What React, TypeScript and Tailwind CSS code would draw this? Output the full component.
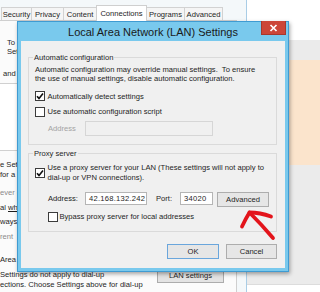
import React from "react";

const Cb = ({ checked }: { checked?: boolean }) => (
  <div className="w-[10px] h-[10px] border border-[#3c3c3c] bg-white flex items-center justify-center shrink-0">
    {checked && (
      <svg width="8" height="8" viewBox="0 0 8 8">
        <path d="M1 4.2 L3 6.4 L7 1.4" stroke="#111" strokeWidth="1.6" fill="none" />
      </svg>
    )}
  </div>
);

const Tab = ({ label, w, selected }: { label: string; w: string; selected?: boolean }) => (
  <div
    className={
      selected
        ? `${w} h-[16px] -mb-px -ml-px relative z-10 border border-b-0 border-[#cfcfcf] bg-white flex items-center justify-center`
        : `${w} h-[13px] -ml-px border border-b-0 border-[#d2d2d2] bg-[#f5f5f5] flex items-center justify-center`
    }
  >
    {label}
  </div>
);

const Frag = ({ children, cls }: { children: React.ReactNode; cls: string }) => (
  <div className={`${cls} h-[9px] whitespace-nowrap`}>{children}</div>
);

export default function App() {
  return (
    <div className="relative w-[320px] h-[292px] overflow-hidden flex bg-white font-['Liberation_Sans',Arial,sans-serif] text-[7.6px] text-[#1e1e1e] leading-[9px]">
      {/* Background Internet Options window */}
      <div className="w-[247px] h-full shrink-0 bg-[#f4f8fa] border-r border-[#a9cde6] flex flex-col">
        <div className="h-[20px] flex items-end pl-[2px] shrink-0">
          <Tab label="Security" w="w-[31px]" />
          <Tab label="Privacy" w="w-[33px]" />
          <Tab label="Content" w="w-[34px]" />
          <Tab label="Connections" w="w-[51px]" selected />
          <Tab label="Programs" w="w-[39px]" />
          <Tab label="Advanced" w="w-[39px]" />
        </div>
        <div className="w-[237px] flex-1 bg-[#fbfbfb] border-t border-r border-[#cfcfcf] flex flex-col whitespace-nowrap">
          <Frag cls="mt-[17px] pl-[7px]">To</Frag>
          <Frag cls="pl-[7px]">Set</Frag>
          <Frag cls="mt-[12.6px] pl-[3px]">and</Frag>
          <div className="mt-[5.2px] h-[68px] bg-white border-y border-[#d0d0d0]" />
          <Frag cls="mt-[9px]">e Set</Frag>
          <Frag cls="mt-[0.8px]">for a</Frag>
          <Frag cls="mt-[9.7px] text-[#8a8a8a]">ever c</Frag>
          <Frag cls="mt-[5.5px]">
            al <span className="underline">wh</span>
          </Frag>
          <Frag cls="mt-[5px]">ways</Frag>
          <Frag cls="mt-[6.5px] text-[#8a8a8a]">rent</Frag>
          <Frag cls="mt-[14px]">Area N</Frag>
          <div className="mt-[4.5px] flex items-start">
            <div className="w-[157px] pt-[1.5px] leading-[9.3px]">
              <div>Settings do not apply to dial-up</div>
              <div>ections. Choose Settings above for dial-up</div>
            </div>
            <div className="w-[67px] h-[14px] bg-[#e3e3e3] border border-[#acacac] flex items-center justify-center">
              LAN settings
            </div>
          </div>
        </div>
      </div>

      {/* Right desktop area */}
      <div className="flex-1 flex flex-col">
        <div className="h-[40px] bg-white shrink-0" />
        <div className="flex-1 bg-[#ebebeb] flex flex-col">
          <div className="mt-[20px] h-[105px] bg-[#fbe4cc]" />
          <div className="flex-1" />
          <div className="h-[8px] bg-white border-t border-[#dcdcdc]" />
        </div>
      </div>

      {/* LAN Settings dialog */}
      <div className="absolute left-[17px] top-[21px] w-[272px] h-[251px] border border-[#3f9bd2] bg-[#79c9ed] flex flex-col px-[3px] pb-[3px] shadow-[1px_2px_4px_rgba(0,0,0,0.35)]">
        <div className="relative h-[19px] shrink-0 flex items-center justify-center text-[11px] leading-[12px] text-[#1a1a1a]">
          Local Area Network (LAN) Settings
          <div className="absolute right-[-1px] top-[-1px] w-[25px] h-[14px] bg-[#cc4638] border border-[#a8372c] border-t-0 flex items-center justify-center">
            <svg width="9" height="8" viewBox="0 0 9 8">
              <path d="M1.5 1 L7.5 7 M7.5 1 L1.5 7" stroke="#fff" strokeWidth="1.7" />
            </svg>
          </div>
        </div>
        <div className="flex-1 bg-[#f0f0f0] flex flex-col">
          {/* Automatic configuration */}
          <div className="relative mt-[16px] ml-[7px] mr-[8px] h-[88px] border border-[#dadada] shrink-0">
            <span className="absolute left-[4px] top-[-5px] bg-[#f0f0f0] px-[1px]">Automatic configuration</span>
            <div className="pl-[6px] pt-[6.6px] flex flex-col whitespace-nowrap">
              <div className="leading-[9.4px]">
                <div>Automatic configuration may override manual settings.&nbsp; To ensure</div>
                <div>the use of manual settings, disable automatic configuration.</div>
              </div>
              <div className="mt-[7.6px] h-[10px] flex items-center gap-[2.5px]">
                <Cb checked />
                <span>Automatically detect settings</span>
              </div>
              <div className="mt-[5.5px] h-[10px] flex items-center gap-[2.5px]">
                <Cb />
                <span>Use automatic configuration script</span>
              </div>
              <div className="mt-[4.5px] h-[15px] flex items-center">
                <span className="ml-[13px] w-[37px] text-[#a3a3a3]">Address</span>
                <div className="w-[128px] h-[15px] border border-[#d6d6d6] bg-[#f0f0f0]" />
              </div>
            </div>
          </div>

          {/* Proxy server */}
          <div className="relative mt-[8px] ml-[7px] mr-[8px] h-[79px] border border-[#dadada] shrink-0">
            <span className="absolute left-[4px] top-[-5px] bg-[#f0f0f0] px-[1px]">Proxy server</span>
            <div className="pl-[6px] pt-[9.3px] flex flex-col whitespace-nowrap">
              <div className="flex items-center gap-[2.5px]">
                <Cb checked />
                <div className="leading-[10px]">
                  <div>Use a proxy server for your LAN (These settings will not apply to</div>
                  <div>dial-up or VPN connections).</div>
                </div>
              </div>
              <div className="mt-[8.7px] h-[15px] flex items-start">
                <span className="ml-[13px] w-[37px] h-[13px] flex items-center">Address:</span>
                <div className="w-[62px] h-[13px] border border-[#b5b5b5] bg-white flex items-center pl-[3px] tracking-[0.25px]">
                  42.168.132.242
                </div>
                <span className="ml-[9px] w-[24px] h-[13px] flex items-center">Port:</span>
                <div className="w-[33px] h-[13px] border border-[#b5b5b5] bg-white flex items-center pl-[3px] tracking-[0.25px]">
                  34020
                </div>
                <div className="ml-[4px] w-[52px] h-[15px] border border-[#adadad] bg-[#e6e6e6] flex items-center justify-center">
                  Advanced
                </div>
              </div>
              <div className="mt-[5px] h-[10px] ml-[13px] flex items-center gap-[1.5px]">
                <Cb />
                <span>Bypass proxy server for local addresses</span>
              </div>
            </div>
          </div>

          {/* Buttons */}
          <div className="mt-[12px] pr-[8px] flex justify-end gap-[7px] shrink-0">
            <div className="w-[52px] h-[15px] border border-[#6aa6dc] bg-[#e6e6e6] flex items-center justify-center">OK</div>
            <div className="w-[51px] h-[15px] border border-[#adadad] bg-[#e6e6e6] flex items-center justify-center">Cancel</div>
          </div>
        </div>
      </div>

      {/* Red hand-drawn arrow */}
      <svg className="absolute left-[238px] top-[206px]" width="40" height="36" viewBox="0 0 40 36">
        <g stroke="#e3141b" strokeWidth="3.8" strokeLinecap="round" strokeLinejoin="round" fill="none">
          <path d="M33 10.5 Q22 6.5 11.5 6.5" />
          <path d="M11.5 6.5 Q7.5 13 4 20.5" />
          <path d="M12 7 Q24 19 35 32" />
        </g>
      </svg>
    </div>
  );
}
